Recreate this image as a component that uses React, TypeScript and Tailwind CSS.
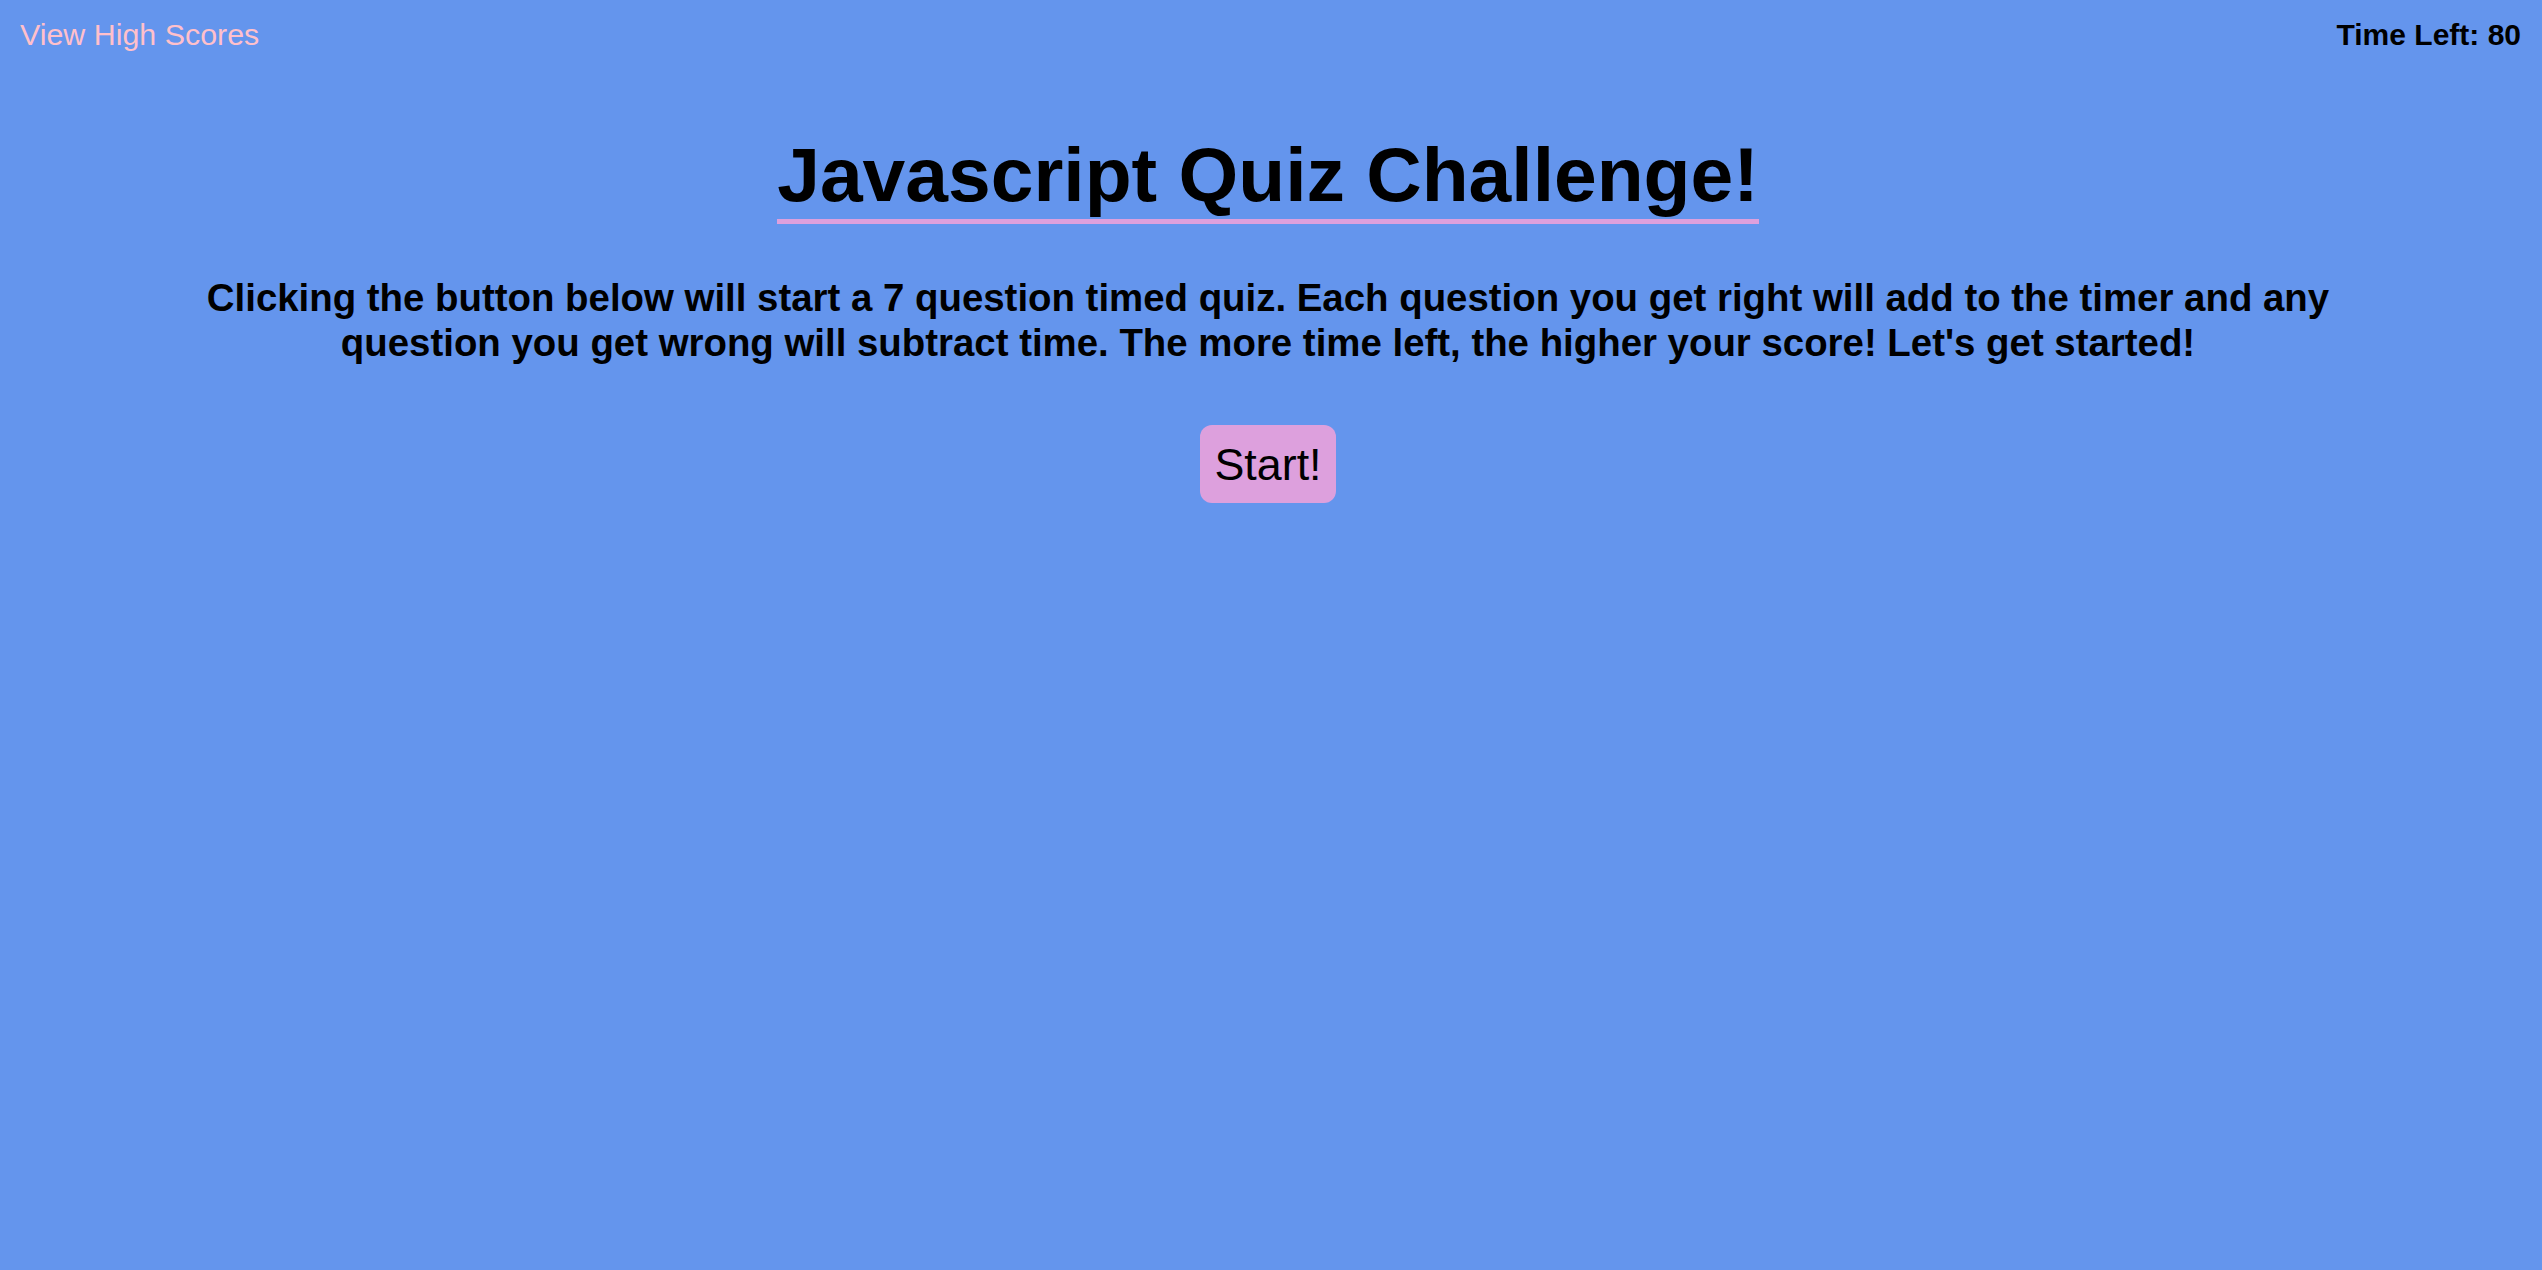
export default function App() {
  return (
    <div
      className="min-h-screen w-full bg-[#6495ED] text-black"
      style={{ fontFamily: '"Liberation Sans", Arial, sans-serif' }}
    >
      <header className="flex items-start justify-between pl-5 pr-[21px] pt-[17px]">
        <a href="#" className="text-[30.4px] leading-[35px] text-[#FFC0CB]">
          View High Scores
        </a>
        <div className="text-[30px] font-bold leading-[35px]">Time Left: 80</div>
      </header>
      <main className="flex flex-col items-center pr-[6px]">
        <h1 className="mt-[78px] border-b-[5px] border-[#DDA0DD] pb-[1px] text-[76.8px] font-bold leading-[88px]">
          Javascript Quiz Challenge!
        </h1>
        <p className="mt-[51px] max-w-[2220px] text-center text-[38.4px] font-bold leading-[45px]">
          Clicking the button below will start a 7 question timed quiz. Each question you get right will add to the
          timer and any question you get wrong will subtract time. The more time left, the higher your score! Let's get
          started!
        </p>
        <button className="mt-[60px] rounded-[12px] bg-[#DDA0DD] px-[14px] py-[13px] text-[44.8px] leading-[52px] text-black">
          Start!
        </button>
      </main>
    </div>
  );
}
